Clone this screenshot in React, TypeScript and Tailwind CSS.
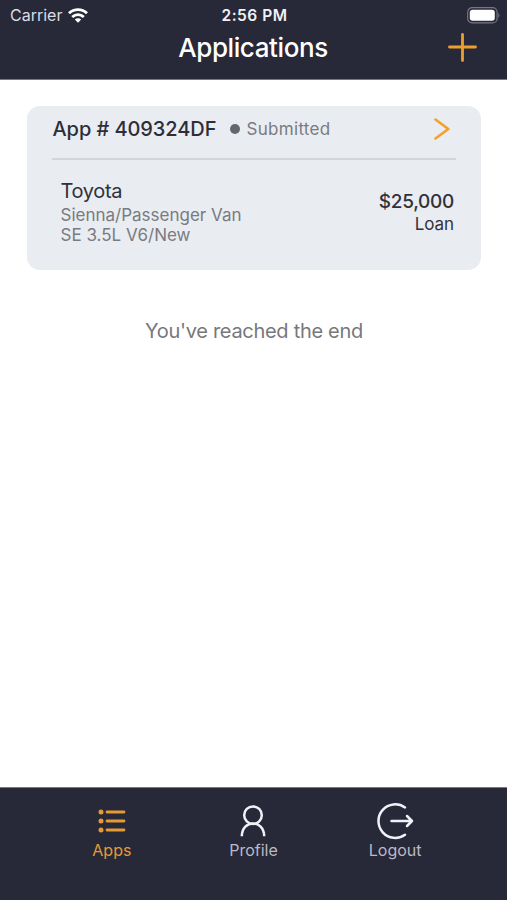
import type { ReactNode } from 'react'

type Application = {
  id: string
  status: string
  make: string
  model: string
  trim: string
  amount: string
  kind: string
}

const applications: Application[] = [
  {
    id: '409324DF',
    status: 'Submitted',
    make: 'Toyota',
    model: 'Sienna/Passenger Van',
    trim: 'SE 3.5L V6/New',
    amount: '$25,000',
    kind: 'Loan',
  },
]

function StatusBar() {
  return (
    <div className="grid h-[30px] grid-cols-3 items-center pl-[10px] pr-[7px] text-[#f1f1f5]">
      <div className="flex items-center gap-[6px]">
        <span className="text-[16px] leading-[30px] text-[#dcdce4]">Carrier</span>
        <svg width="20" height="15" viewBox="0 0 20 15" fill="none" stroke="#fff" strokeWidth="2.9">
          <path d="M1 5.3C6.2.4 13.8.4 19 5.3" />
          <path d="M4.2 9c3.4-3.2 8.2-3.2 11.6 0" />
          <path d="M6.8 11.6c1.8-1.7 4.6-1.7 6.4 0L10 14.8Z" fill="#fff" stroke="none" />
        </svg>
      </div>
      <span className="whitespace-nowrap pr-px pt-px text-center text-[15.5px] font-semibold leading-[29px] tracking-[0.5px]">
        2:56 PM
      </span>
      <svg className="justify-self-end" width="33" height="17" viewBox="0 0 33 17" fill="none">
        <rect x="0.7" y="0.7" width="29.4" height="15.2" rx="4.5" stroke="#777783" strokeWidth="1.2" />
        <rect x="2.8" y="2.8" width="25" height="11" rx="2.8" fill="#fff" />
        <path d="M31.3 6v4.8c1.6-.8 1.6-4 0-4.8Z" fill="#777783" />
      </svg>
    </div>
  )
}

function Header() {
  return (
    <header className="h-[80px] shrink-0 border-b border-[#777783] bg-[#272838]">
      <StatusBar />
      <div className="grid h-[34px] grid-cols-[1fr_auto_1fr] items-center pr-[30px]">
        <h1 className="col-start-2 pl-[29px] pt-px text-[26px] font-medium leading-[34px] tracking-[-0.4px] text-white">
          Applications
        </h1>
        <button className="justify-self-end" aria-label="New application">
          <svg width="29" height="29" viewBox="0 0 29 29" fill="none" stroke="#ed9f2d" strokeWidth="2.8" strokeLinecap="round">
            <path d="M14.5 1.5v26M1.5 14h26" />
          </svg>
        </button>
      </div>
    </header>
  )
}

function ApplicationCard({ app }: { app: Application }) {
  return (
    <article className="h-[164px] rounded-[13px] bg-[#e9ecf0] pl-[25px] pr-[25px]">
      <div className="flex h-[54px] items-center border-b-2 border-[#d2d6da] pb-[6px] pr-[6px]">
        <h2 className="w-[178px] whitespace-nowrap pl-[0.5px] text-[20px] font-medium leading-6 tracking-[-0.07px] text-[#2d2e39]">
          App # {app.id}
        </h2>
        <span className="size-[10px] rounded-full bg-[#65666e]" />
        <span className="ml-[6.5px] text-[17px] leading-6 tracking-[0.3px] text-[#797b82]">{app.status}</span>
        <svg className="ml-auto" width="16" height="22" viewBox="0 0 16 22" fill="none" stroke="#f5a02c" strokeWidth="2.6" strokeLinecap="round" strokeLinejoin="round">
          <path d="M1.5 1.5 14.3 11 1.5 20.5" />
        </svg>
      </div>
      <div className="flex justify-between pl-[8.5px] pr-[2px]">
        <div className="pt-[19px] text-[17px] leading-5 text-[#797b82]">
          <div className="text-[20px] leading-6 tracking-[-0.35px] text-[#30313b]">{app.make}</div>
          <div className="pt-[2px]">{app.model}</div>
          <div>{app.trim}</div>
        </div>
        <div className="pt-[30px] text-right text-[#30313b]">
          <div className="text-[19px] font-medium leading-6 tracking-[-0.3px]">{app.amount}</div>
          <div className="text-[17px] leading-5 tracking-[-0.1px]">{app.kind}</div>
        </div>
      </div>
    </article>
  )
}

function ListIcon() {
  return (
    <svg width="28" height="24" viewBox="0 0 28 24" fill="none" stroke="currentColor" strokeWidth="2.8" strokeLinecap="round">
      <path d="M9 3h17M9 12h17M9 21h17" />
      <g fill="currentColor" stroke="none">
        <circle cx="3" cy="3" r="2.5" />
        <circle cx="3" cy="12" r="2.5" />
        <circle cx="3" cy="21" r="2.5" />
      </g>
    </svg>
  )
}

function ProfileIcon() {
  return (
    <svg width="27" height="32" viewBox="0 0 27 32" fill="none" stroke="#f1f2f8" strokeWidth="2.5">
      <circle cx="13" cy="10.2" r="8.8" />
      <path d="M1.8 31.3C2 14.2 24 14.2 24.2 31.3" />
    </svg>
  )
}

function LogoutIcon() {
  return (
    <svg width="37" height="37" viewBox="0 0 37 37" fill="none" stroke="#f1f2f8" strokeWidth="2.5" strokeLinecap="round" strokeLinejoin="round">
      <path d="M28 4.4A16.8 16.8 0 1 0 28 31.8" />
      <path d="M14.5 18h20.5M30 13l5 5-5 5" />
    </svg>
  )
}

function Tab({ label, active, children }: { label: string; active?: boolean; children: ReactNode }) {
  return (
    <button className={`flex flex-1 flex-col items-center ${active ? 'text-[#e59a36]' : 'text-[#b9bac5]'}`}>
      <span className="flex h-[38px] items-center">{children}</span>
      <span className="text-[16px] leading-5">{label}</span>
    </button>
  )
}

export default function App() {
  return (
    <div className="flex h-screen flex-col bg-white font-['Inter',sans-serif]">
      <Header />
      <main className="flex-1 px-[27px] pr-[26px] pt-[26px]">
        {applications.map((app) => (
          <ApplicationCard key={app.id} app={app} />
        ))}
        <p className="pt-[49px] text-center text-[20px] leading-6 tracking-[-0.3px] text-[#77787c]">You've reached the end</p>
      </main>
      <nav className="flex h-[113px] shrink-0 items-start border-t border-[#777783] bg-[#272838] px-[41px] pt-[14px]">
        <Tab label="Apps" active>
          <ListIcon />
        </Tab>
        <Tab label="Profile">
          <ProfileIcon />
        </Tab>
        <Tab label="Logout">
          <LogoutIcon />
        </Tab>
      </nav>
    </div>
  )
}
